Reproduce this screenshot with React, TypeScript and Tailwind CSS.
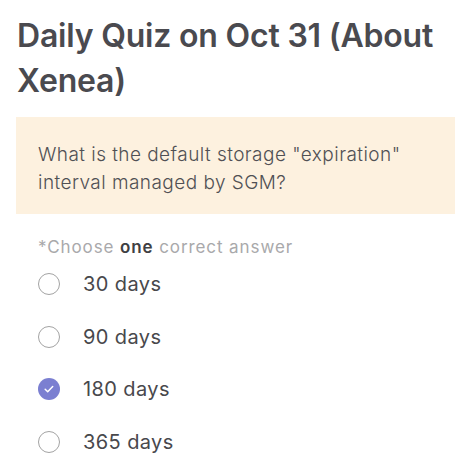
import React, { useState } from 'react';

const OPTIONS = ['30 days', '90 days', '180 days', '365 days'];

const Radio: React.FC<{ checked: boolean }> = ({ checked }) =>
  checked ? (
    <span className="flex h-[22px] w-[22px] items-center justify-center rounded-full bg-[#7b7fd1]">
      <svg width="12" height="12" viewBox="0 0 12 12" fill="none">
        <path d="M2.2 6.3l2.5 2.4 5-5.2" stroke="#fff" strokeWidth="1.5" strokeLinecap="round" strokeLinejoin="round" />
      </svg>
    </span>
  ) : (
    <span className="block h-[22px] w-[22px] rounded-full border-[1.5px] border-[#a3a3a3] bg-white" />
  );

export default function App() {
  const [selected, setSelected] = useState(2);

  return (
    <div
      className="h-[466px] w-[474px] overflow-hidden bg-white"
      style={{ fontFamily: 'Inter, "Noto Sans", sans-serif' }}
    >
      <h1 className="px-[17px] pt-[13px] text-[32px] font-semibold leading-[45px] tracking-[-0.2px] text-[#4a4a4f]">
        Daily Quiz on Oct 31 (About Xenea)
      </h1>

      <div className="ml-[16px] mr-[19px] mt-[14px] h-[97px] bg-[#fdf1df] px-[22px] pt-[24px]">
        <p className="max-w-[380px] text-[19px] font-light leading-[28px] tracking-[0.45px] text-[#505054]">
          What is the default storage "expiration" interval managed by SGM?
        </p>
      </div>

      <p className="mt-[21px] px-[38px] text-[17px] leading-[24px] tracking-[0.9px] text-[#a9a9ab]">
        *Choose <span className="font-semibold text-[#3f3f43]">one</span> correct answer
      </p>

      <ul className="mt-[-1px] flex flex-col">
        {OPTIONS.map((opt, i) => (
          <li
            key={opt}
            className="flex h-[52.5px] cursor-pointer items-center gap-[23px] px-[38px]"
            onClick={() => setSelected(i)}
          >
            <Radio checked={selected === i} />
            <span className="text-[20px] tracking-[0.4px] text-[#48484c]">{opt}</span>
          </li>
        ))}
      </ul>
    </div>
  );
}
